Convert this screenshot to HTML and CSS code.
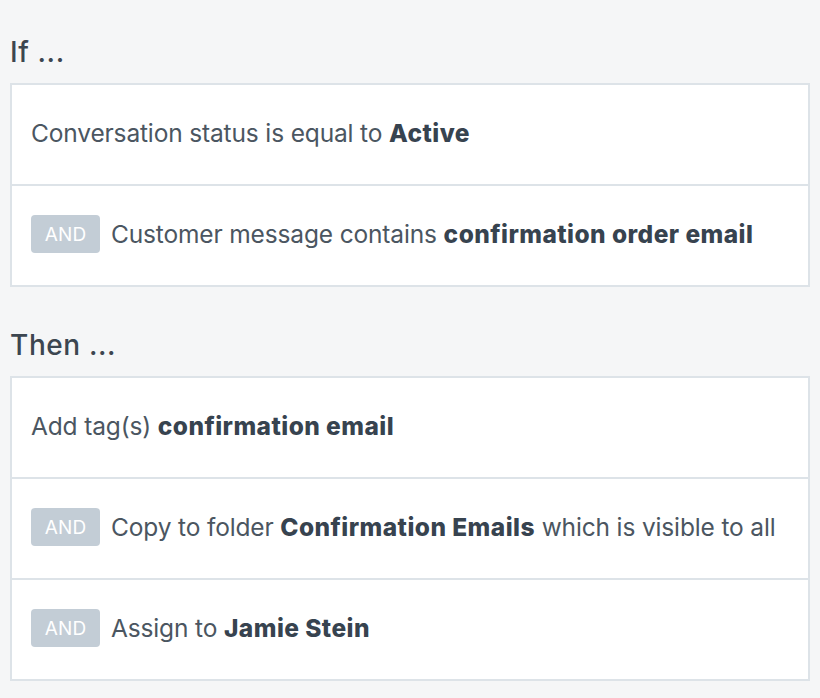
FILE: index.html
```html
<!DOCTYPE html>
<html>
<head>
<meta charset="utf-8">
<link rel="stylesheet" href="styles.css">
</head>
<body>
<div class="page">
  <h2 class="heading">If ...</h2>
  <div class="box">
    <div class="row">Conversation status is equal to&nbsp;<b>Active</b></div>
    <div class="row"><span class="badge">AND</span>Customer message contains&nbsp;<b>confirmation order email</b></div>
  </div>
  <h2 class="heading heading-then">Then ...</h2>
  <div class="box">
    <div class="row">Add tag(s)&nbsp;<b>confirmation email</b></div>
    <div class="row"><span class="badge">AND</span>Copy to folder&nbsp;<b>Confirmation Emails</b>&nbsp;which is visible to all</div>
    <div class="row"><span class="badge">AND</span>Assign to&nbsp;<b>Jamie Stein</b></div>
  </div>
</div>
</body>
</html>
```

FILE: styles.css
```css
html, body {
  margin: 0;
  padding: 0;
  background: #f5f6f7;
}
.page {
  padding: 36px 10px 0 10px;
  width: 800px;
  font-family: Inter, "Noto Sans", sans-serif;
}
.heading {
  margin: 0 0 15px 0;
  font-size: 28px;
  line-height: 32px;
  font-weight: 500;
  letter-spacing: 0.6px;
  color: #3c4650;
}
.heading-then {
  margin-top: 42px;
}
.box {
  background: #ffffff;
  border: 2px solid #dde3e8;
}
.row {
  display: flex;
  align-items: center;
  height: 96px;
  padding: 0 19px 3px 19px;
  font-size: 24.5px;
  letter-spacing: -0.15px;
  color: #4b5661;
  white-space: nowrap;
}
.row + .row {
  border-top: 2px solid #dde3e8;
}
.row b {
  font-weight: 800;
  letter-spacing: 0.45px;
  color: #37434f;
}
.badge {
  display: inline-flex;
  align-items: center;
  justify-content: center;
  width: 69px;
  height: 38px;
  margin-right: 11px;
  background: #c3cdd6;
  color: #ffffff;
  border-radius: 4px;
  font-size: 19px;
  letter-spacing: 0.2px;
}
```
